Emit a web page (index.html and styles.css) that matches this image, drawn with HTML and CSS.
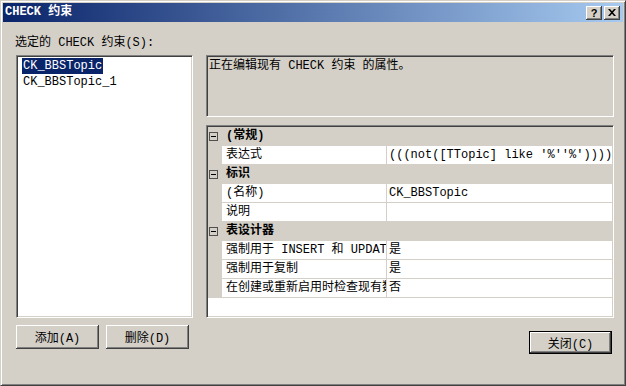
FILE: index.html
```html
<!DOCTYPE html>
<html lang="zh-CN">
<head>
  <meta charset="UTF-8" />
  <title>CHECK 约束</title>
  <link rel="stylesheet" href="styles.css">
</head>
<body>

  <div class="window">

    <!-- Title bar -->
    <div class="titlebar">
      <span class="title">CHECK 约束</span>
      <div class="caption-btn help">?</div>
      <div class="caption-btn">
        <svg width="8" height="7" viewBox="0 0 8 7">
          <path d="M0 0 L2 0 L4 2.3 L6 0 L8 0 L5 3.5 L8 7 L6 7 L4 4.7 L2 7 L0 7 L3 3.5 Z" fill="#000"/>
        </svg>
      </div>
    </div>

    <div class="body">

      <!-- Left: constraint list -->
      <div class="left">
        <div class="label">选定的 CHECK 约束(S):</div>
        <div class="listbox">
          <div class="item"><span class="selected">CK_BBSTopic</span></div>
          <div class="item"><span>CK_BBSTopic_1</span></div>
        </div>
        <div class="buttons">
          <div class="btn">添加(A)</div>
          <div class="btn">删除(D)</div>
        </div>
      </div>

      <!-- Right: properties -->
      <div class="right">
        <div class="desc">正在编辑现有 CHECK 约束 的属性。</div>

        <div class="grid">
          <div class="row cat"><span class="toggle"></span>(常规)</div>
          <div class="row">
            <div class="gutter"></div>
            <div class="name">表达式</div>
            <div class="value">(((not([TTopic] like '%''%'))))</div>
          </div>
          <div class="row cat"><span class="toggle"></span>标识</div>
          <div class="row">
            <div class="gutter"></div>
            <div class="name">(名称)</div>
            <div class="value">CK_BBSTopic</div>
          </div>
          <div class="row">
            <div class="gutter"></div>
            <div class="name">说明</div>
            <div class="value"></div>
          </div>
          <div class="row cat"><span class="toggle"></span>表设计器</div>
          <div class="row">
            <div class="gutter"></div>
            <div class="name">强制用于 INSERT 和 UPDATE</div>
            <div class="value">是</div>
          </div>
          <div class="row">
            <div class="gutter"></div>
            <div class="name">强制用于复制</div>
            <div class="value">是</div>
          </div>
          <div class="row">
            <div class="gutter"></div>
            <div class="name">在创建或重新启用时检查现有数据</div>
            <div class="value">否</div>
          </div>
        </div>

        <div class="footer">
          <div class="btn default">关闭(C)</div>
        </div>
      </div>

    </div>
  </div>

</body>
</html>
```

FILE: styles.css
```css
* { box-sizing: border-box; margin: 0; padding: 0; }
html, body { width: 626px; height: 386px; overflow: hidden; }
body { font-family: "Liberation Mono", "Noto Sans CJK SC", monospace; font-size: 12px; color: #000; background: #d4d0c8; }

.window { width: 626px; height: 386px; display: flex; flex-direction: column; padding: 2px; border: 1px solid; border-color: #d4d0c8 #404040 #404040 #d4d0c8; box-shadow: inset 1px 1px #fff, inset -1px -1px #808080; }

/* Title bar */
.titlebar { height: 19px; display: flex; align-items: center; padding: 0 3px 0 2px; background: linear-gradient(to right, #0a246a, #a6caf0); color: #fff; font-weight: bold; }
.title { flex: 1; line-height: 19px; }
.caption-btn { width: 16px; height: 14px; margin-left: 2px; display: flex; align-items: center; justify-content: center; background: #d4d0c8; color: #000; font-family: "Liberation Sans", sans-serif; font-size: 11px; font-weight: bold; box-shadow: inset -1px -1px #404040, inset 1px 1px #fff, inset -2px -2px #808080, inset 2px 2px #d4d0c8; }

/* Body */
.body { flex: 1; display: flex; gap: 13px; padding: 14px 9px 0 13px; }
.left { width: 177px; display: flex; flex-direction: column; }
.right { width: 408px; display: flex; flex-direction: column; padding-top: 19px; }

.label { height: 14px; line-height: 14px; margin: 0 0 5px -1px; white-space: nowrap; }

.listbox { height: 263px; background: #fff; padding: 2px 0 0 5px; border: 1px solid; border-color: #808080 #fff #fff #808080; box-shadow: inset 1px 1px #404040, inset -1px -1px #d4d0c8; }
.item { height: 16px; line-height: 16px; white-space: nowrap; }
.item span { display: inline-block; padding: 0 1px; }
.item .selected { background: #0a246a; color: #fff; }

.buttons { display: flex; gap: 7px; margin-top: 7px; }
.btn { width: 83px; height: 24px; display: flex; align-items: center; justify-content: center; background: #d4d0c8; box-shadow: inset -1px -1px #404040, inset 1px 1px #fff, inset -2px -2px #808080, inset 2px 2px #d4d0c8; }
.btn.default { height: 23px; border: 1px solid #000; }

.desc { height: 62px; line-height: 14px; padding: 3px 2px; border: 1px solid; border-color: #808080 #fff #fff #808080; box-shadow: inset 1px 1px #404040, inset -1px -1px #d4d0c8; }

/* Property grid */
.grid { height: 193px; margin-top: 8px; padding: 1px; background: #fff; border: 1px solid; border-color: #808080 #fff #fff #808080; box-shadow: inset 1px 1px #404040, inset -1px -1px #d4d0c8; overflow: hidden; }
.row { height: 19px; display: flex; align-items: center; line-height: 18px; border-bottom: 1px solid #d4d0c8; white-space: nowrap; }
.row.cat { background: #d4d0c8; font-weight: bold; }
.toggle { width: 9px; height: 9px; margin: 0 8px 0 1px; border: 1px solid #505050; position: relative; }
.toggle::after { content: ""; position: absolute; left: 1px; top: 3px; width: 5px; height: 1px; background: #000; }
.gutter { width: 14px; height: 18px; background: #d4d0c8; }
.name { width: 165px; height: 18px; padding-left: 4px; border-right: 1px solid #d4d0c8; overflow: hidden; }
.value { flex: 1; height: 18px; padding-left: 2px; overflow: hidden; }

.footer { display: flex; justify-content: flex-end; margin-top: 13px; padding-right: 2px; }
```
